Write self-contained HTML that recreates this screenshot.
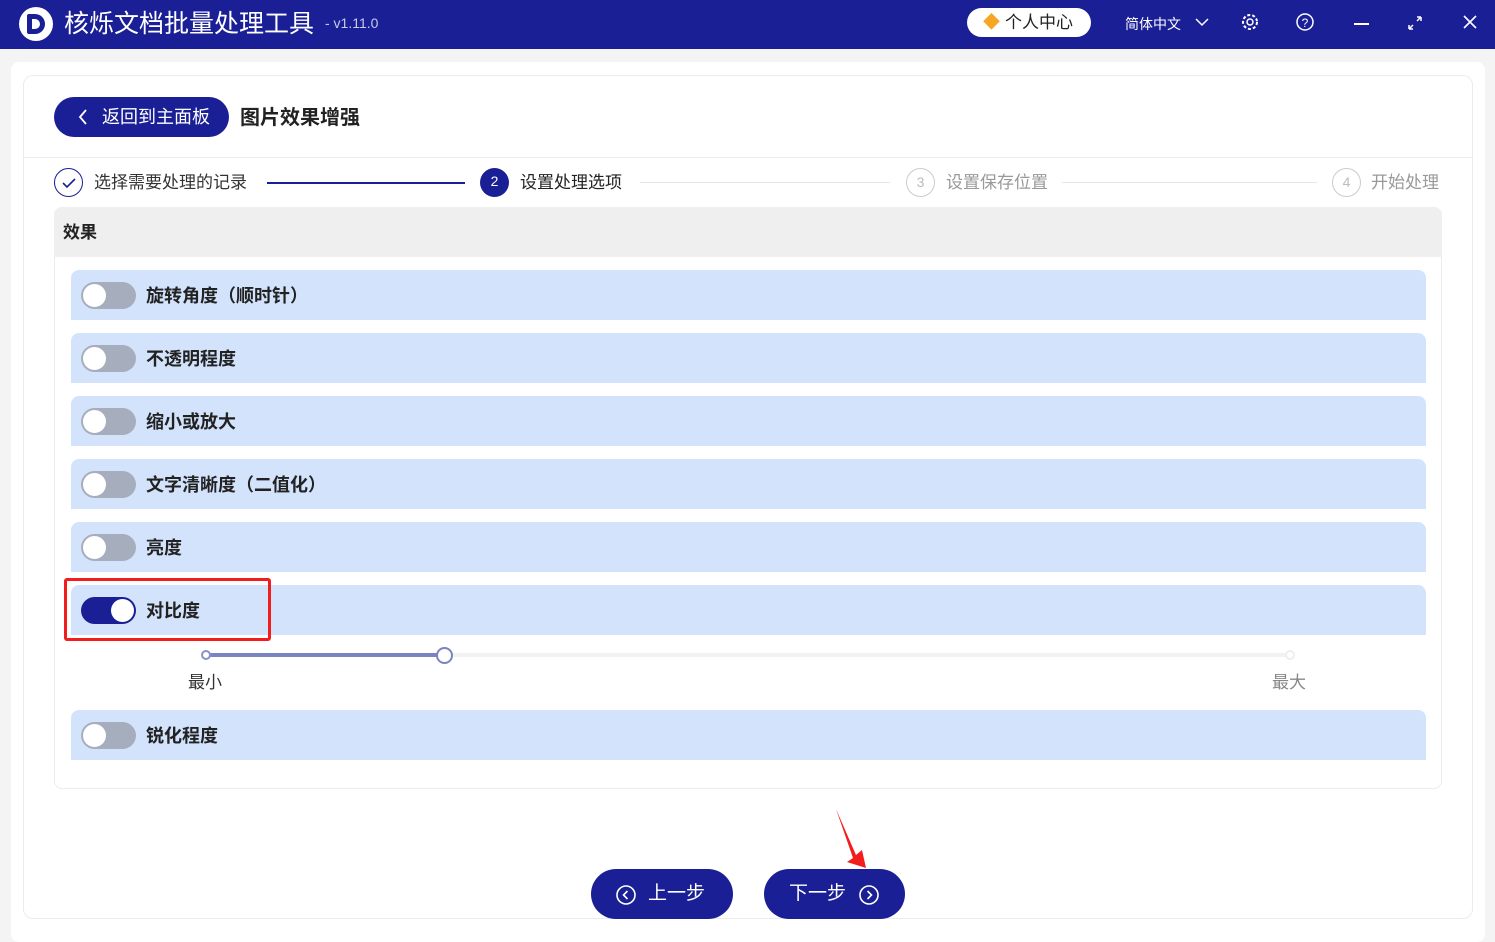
<!DOCTYPE html>
<html><head><meta charset="utf-8"><style>
*{margin:0;padding:0;box-sizing:border-box}
body{width:1495px;height:925px;overflow:hidden;background:#f4f4f4;font-family:"Liberation Sans","Noto Sans CJK SC",sans-serif;position:relative}
.top{position:absolute;left:0;top:0;width:1495px;height:49px;background:#1a1f96;color:#fff}
.abs{position:absolute}
.panel{position:absolute;left:11px;top:62px;width:1474px;height:880px;background:#fff;border-radius:8px}
.card{position:absolute;left:23px;top:75px;width:1450px;height:844px;border:1px solid #ececec;border-radius:10px;background:#fff}
.row{position:absolute;left:71px;width:1355px;height:50px;background:#d3e3fc;border-radius:8px 8px 0 0}
.tg{position:absolute;left:10px;top:12px;width:55px;height:27px;border-radius:14px;background:#a6adbd}
.tg::after{content:"";position:absolute;left:2px;top:2px;width:23px;height:23px;border-radius:50%;background:#fff}
.tg.on{background:#1a1f96}.tg.on::after{left:30px}
.lbl{position:absolute;left:75px;top:0;line-height:52px;font-size:18px;font-weight:bold;color:#222}
.step{position:absolute;top:168px;height:29px;font-size:17px;line-height:29px}
.circ{position:absolute;width:29px;height:29px;border-radius:50%;text-align:center;line-height:27px;font-size:14px}
.btn{position:absolute;top:869px;height:50px;border-radius:25px;background:#1a1f96;color:#fff;font-size:19px;line-height:50px}
</style></head><body>
<div class="top">
 <div class="abs" style="left:19px;top:7px;width:34px;height:34px;border-radius:50%;background:#fff"></div>
 <div class="abs" style="left:27px;top:14px;width:18px;height:20px;border:5px solid #1a1f96;border-radius:2px 10px 10px 2px"></div>
 <div class="abs" style="left:64px;top:7px;font-size:25px;line-height:34px">核烁文档批量处理工具</div>
 <div class="abs" style="left:325px;top:15px;font-size:14px;color:#c8cae8">- v1.11.0</div>
 <div class="abs" style="left:967px;top:8px;width:124px;height:29px;background:#fff;border-radius:15px;color:#222;font-size:17px;line-height:29px;padding-left:38px">个人中心</div>
 <div class="abs" style="left:983px;top:13px;color:#f5a623;font-size:17px;line-height:20px">◆</div>
 <div class="abs" style="left:1125px;top:14px;font-size:14px">简体中文</div>
 <svg class="abs" style="left:1194px;top:15px" width="16" height="14"><path d="M2 4l6 6 6-6" stroke="#fff" fill="none" stroke-width="1.5"/></svg>
 <svg class="abs" style="left:1240px;top:12px" width="20" height="20"><circle cx="10" cy="10" r="3" stroke="#fff" fill="none" stroke-width="1.5"/><circle cx="10" cy="10" r="7" stroke="#fff" fill="none" stroke-width="2" stroke-dasharray="3 2"/></svg>
 <svg class="abs" style="left:1295px;top:12px" width="20" height="20"><circle cx="10" cy="10" r="8" stroke="#fff" fill="none" stroke-width="1.5"/><text x="10" y="15" font-size="12" fill="#fff" text-anchor="middle">?</text></svg>
 <div class="abs" style="left:1354px;top:23px;width:15px;height:2px;background:#fff"></div>
 <svg class="abs" style="left:1407px;top:15px" width="16" height="16"><path d="M2 14l4-4M14 2l-4 4M2 14v-4M2 14h4M14 2v4M14 2h-4" stroke="#fff" stroke-width="1.5" fill="none"/></svg>
 <svg class="abs" style="left:1462px;top:14px" width="16" height="16"><path d="M2 2l12 12M14 2L2 14" stroke="#fff" stroke-width="1.6"/></svg>
</div>
<div class="panel"></div>
<div class="card"></div>
<div class="abs" style="left:24px;top:157px;width:1448px;height:1px;background:#ececec"></div>
<div class="abs" style="left:54px;top:97px;width:175px;height:40px;border-radius:20px;background:#1a1f96;color:#fff;font-size:18px;line-height:40px;padding-left:48px">返回到主面板</div>
<svg class="abs" style="left:77px;top:108px" width="12" height="18"><path d="M9 2L3 9l6 7" stroke="#fff" stroke-width="1.8" fill="none"/></svg>
<div class="abs" style="left:240px;top:104px;font-size:20px;font-weight:bold;color:#222;line-height:28px">图片效果增强</div>

<div class="circ" style="left:54px;top:168px;border:1.5px solid #1a1f96"></div>
<svg class="abs" style="left:61px;top:176px" width="16" height="14"><path d="M2 7l4 4 8-8" stroke="#1a1f96" stroke-width="1.6" fill="none"/></svg>
<div class="step" style="left:94px;color:#333">选择需要处理的记录</div>
<div class="abs" style="left:267px;top:182px;width:198px;height:1.5px;background:#1a1f96"></div>
<div class="circ" style="left:480px;top:168px;background:#1a1f96;color:#fff">2</div>
<div class="step" style="left:520px;color:#222">设置处理选项</div>
<div class="abs" style="left:640px;top:182px;width:250px;height:1px;background:#e6e6e6"></div>
<div class="circ" style="left:906px;top:168px;border:1.5px solid #ccc;color:#bbb">3</div>
<div class="step" style="left:946px;color:#999">设置保存位置</div>
<div class="abs" style="left:1062px;top:182px;width:255px;height:1px;background:#e6e6e6"></div>
<div class="circ" style="left:1332px;top:168px;border:1.5px solid #ccc;color:#bbb">4</div>
<div class="step" style="left:1371px;color:#999">开始处理</div>

<div class="abs" style="left:54px;top:207px;width:1388px;height:582px;border:1px solid #ececec;border-radius:8px"></div>
<div class="abs" style="left:54px;top:207px;width:1388px;height:50px;background:#efefef;border-radius:8px 8px 0 0;font-size:17px;font-weight:bold;line-height:52px;padding-left:9px;color:#222">效果</div>

<div class="row" style="top:270px"><div class="tg"></div><div class="lbl">旋转角度（顺时针）</div></div>
<div class="row" style="top:333px"><div class="tg"></div><div class="lbl">不透明程度</div></div>
<div class="row" style="top:396px"><div class="tg"></div><div class="lbl">缩小或放大</div></div>
<div class="row" style="top:459px"><div class="tg"></div><div class="lbl">文字清晰度（二值化）</div></div>
<div class="row" style="top:522px"><div class="tg"></div><div class="lbl">亮度</div></div>
<div class="row" style="top:585px"><div class="tg on"></div><div class="lbl">对比度</div></div>
<div class="abs" style="left:64px;top:578px;width:207px;height:63px;border:3px solid #f21d1d;border-radius:3px"></div>
<div class="abs" style="left:205px;top:653px;width:1085px;height:4px;background:#f2f2f2;border-radius:2px"></div>
<div class="abs" style="left:205px;top:653px;width:240px;height:4px;background:#7b84c2"></div>
<div class="abs" style="left:201px;top:650px;width:10px;height:10px;border-radius:50%;border:2px solid #8a90cc;background:#fff"></div>
<div class="abs" style="left:436px;top:647px;width:17px;height:17px;border-radius:50%;border:2px solid #7b84c2;background:#fff"></div>
<div class="abs" style="left:1285px;top:650px;width:10px;height:10px;border-radius:50%;border:2px solid #eee;background:#fff"></div>
<div class="abs" style="left:188px;top:668px;font-size:17px;color:#333">最小</div>
<div class="abs" style="left:1272px;top:668px;font-size:17px;color:#888">最大</div>
<div class="row" style="top:710px"><div class="tg"></div><div class="lbl">锐化程度</div></div>

<div class="btn" style="left:591px;width:142px;padding-left:57px">上一步</div>
<svg class="abs" style="left:615px;top:884px" width="22" height="22"><circle cx="11" cy="11" r="9" stroke="#fff" stroke-width="1.6" fill="none"/><path d="M12.5 7l-4 4 4 4" stroke="#fff" stroke-width="1.6" fill="none"/></svg>
<div class="btn" style="left:764px;width:141px;padding-left:25px">下一步</div>
<svg class="abs" style="left:858px;top:884px" width="22" height="22"><circle cx="11" cy="11" r="9" stroke="#fff" stroke-width="1.6" fill="none"/><path d="M9.5 7l4 4-4 4" stroke="#fff" stroke-width="1.6" fill="none"/></svg>
<svg class="abs" style="left:830px;top:805px" width="45" height="70"><path d="M6 4L26 50L32 45L36 63L17 57L23 53Z" fill="#f21d1d"/></svg>
</body></html>
